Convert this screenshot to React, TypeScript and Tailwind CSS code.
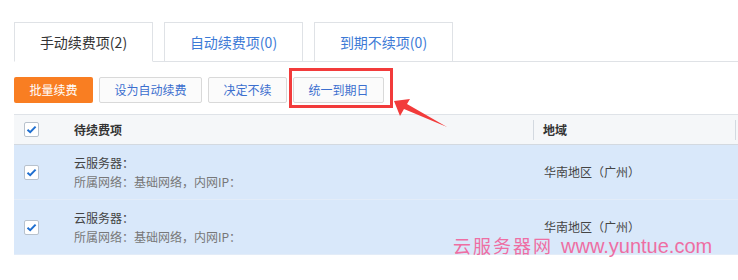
import React from 'react';

const cjk = '"Noto Sans CJK SC", "Liberation Sans", sans-serif';

const tabs = [
  { label: '手动续费项(2)', active: true },
  { label: '自动续费项(0)', active: false },
  { label: '到期不续项(0)', active: false },
];

const rows = [
  { name: '云服务器：', net: '所属网络：基础网络，内网IP：', region: '华南地区（广州）' },
  { name: '云服务器：', net: '所属网络：基础网络，内网IP：', region: '华南地区（广州）' },
];

function Check() {
  return (
    <span className="flex h-[15px] w-[15px] items-center justify-center rounded-[2px] border border-[#b8c2cd] bg-white">
      <svg width="11" height="9" viewBox="0 0 11 9">
        <path d="M1.5 4.8 L4.2 7.2 L9.6 1.6" fill="none" stroke="#1f6fd0" strokeWidth="2" />
      </svg>
    </span>
  );
}

export default function App() {
  return (
    <div className="relative h-[280px] w-[738px] overflow-hidden bg-white" style={{ fontFamily: cjk }}>
      {/* tabs */}
      <div className="flex pl-[14px] pt-[22px]">
        {tabs.map((t, i) => (
          <React.Fragment key={i}>
            <div
              className={
                'flex h-[40px] w-[139px] items-center justify-center border border-[#dfe2e6] text-[14px] ' +
                (t.active ? 'border-b-white text-[#333]' : 'border-b-[#dfe2e6] text-[#3c7ad6]')
              }
            >
              {t.label}
            </div>
            <div className="w-[11px] border-b border-[#dfe2e6]" />
          </React.Fragment>
        ))}
        <div className="flex-1 border-b border-[#dfe2e6]" />
      </div>

      {/* buttons */}
      <div className="flex gap-[6px] pl-[14px] pt-[15px]">
        <button className="h-[26px] w-[79px] rounded-[2px] bg-[#f97e22] text-[12px] text-white">批量续费</button>
        <button className="h-[26px] w-[103px] rounded-[2px] border border-[#d9d9d9] bg-[#fbfbfb] text-[12px] text-[#3c6fcf]">设为自动续费</button>
        <button className="h-[26px] w-[79px] rounded-[2px] border border-[#d9d9d9] bg-[#fbfbfb] text-[12px] text-[#3c6fcf]">决定不续</button>
        <button className="h-[26px] w-[91px] rounded-[2px] border border-[#d9d9d9] bg-[#fbfbfb] text-[12px] text-[#3c6fcf]">统一到期日</button>
      </div>

      {/* table */}
      <div className="ml-[14px] mt-[11px]">
        <div className="flex h-[31px] items-center border-y border-t-[#dfe3e8] border-b-[#d3d9e0] bg-[#f5f7f9] text-[12px] font-bold text-[#333]">
          <div className="w-[60px] pl-[10px]">
            <Check />
          </div>
          <div className="flex-1">待续费项</div>
          <div className="h-[20px] w-px bg-[#d3d9e0]" />
          <div className="w-[201px] pl-[9px]">地域</div>
          <div className="h-[20px] w-px bg-[#d3d9e0]" />
          <div className="w-[2px]" />
        </div>
        {rows.map((r, i) => (
          <div key={i} className="flex h-[55px] items-center border-b border-[#e3ecf8] bg-[#d9e8fa] text-[12px]">
            <div className="w-[60px] pl-[10px]">
              <Check />
            </div>
            <div className="flex-1 leading-[19px]">
              <div className="text-[#444]">{r.name}</div>
              <div className="text-[#777]">{r.net}</div>
            </div>
            <div className="w-[204px] pl-[10px] text-[#444]">{r.region}</div>
          </div>
        ))}
      </div>

      {/* red highlight box */}
      <div className="absolute left-[289px] top-[68px] h-[40px] w-[104px] border-[3px] border-[#f23b3b]" />

      {/* arrow */}
      <svg className="absolute left-0 top-0" width="738" height="280">
        <polygon points="394,101 410,99 407,104 447,127 404,109 400,116" fill="#f23b3b" />
      </svg>

      {/* watermark */}
      <div className="absolute left-[453px] top-[231px] flex items-baseline text-[#ee6ea3]">
        <span className="text-[18px] tracking-[2px]" style={{ fontFamily: '"Noto Sans CJK SC", serif' }}>云服务器网</span>
        <span className="ml-[8px] text-[20px]" style={{ fontFamily: '"Liberation Sans", sans-serif' }}>www.yuntue.com</span>
      </div>
    </div>
  );
}
